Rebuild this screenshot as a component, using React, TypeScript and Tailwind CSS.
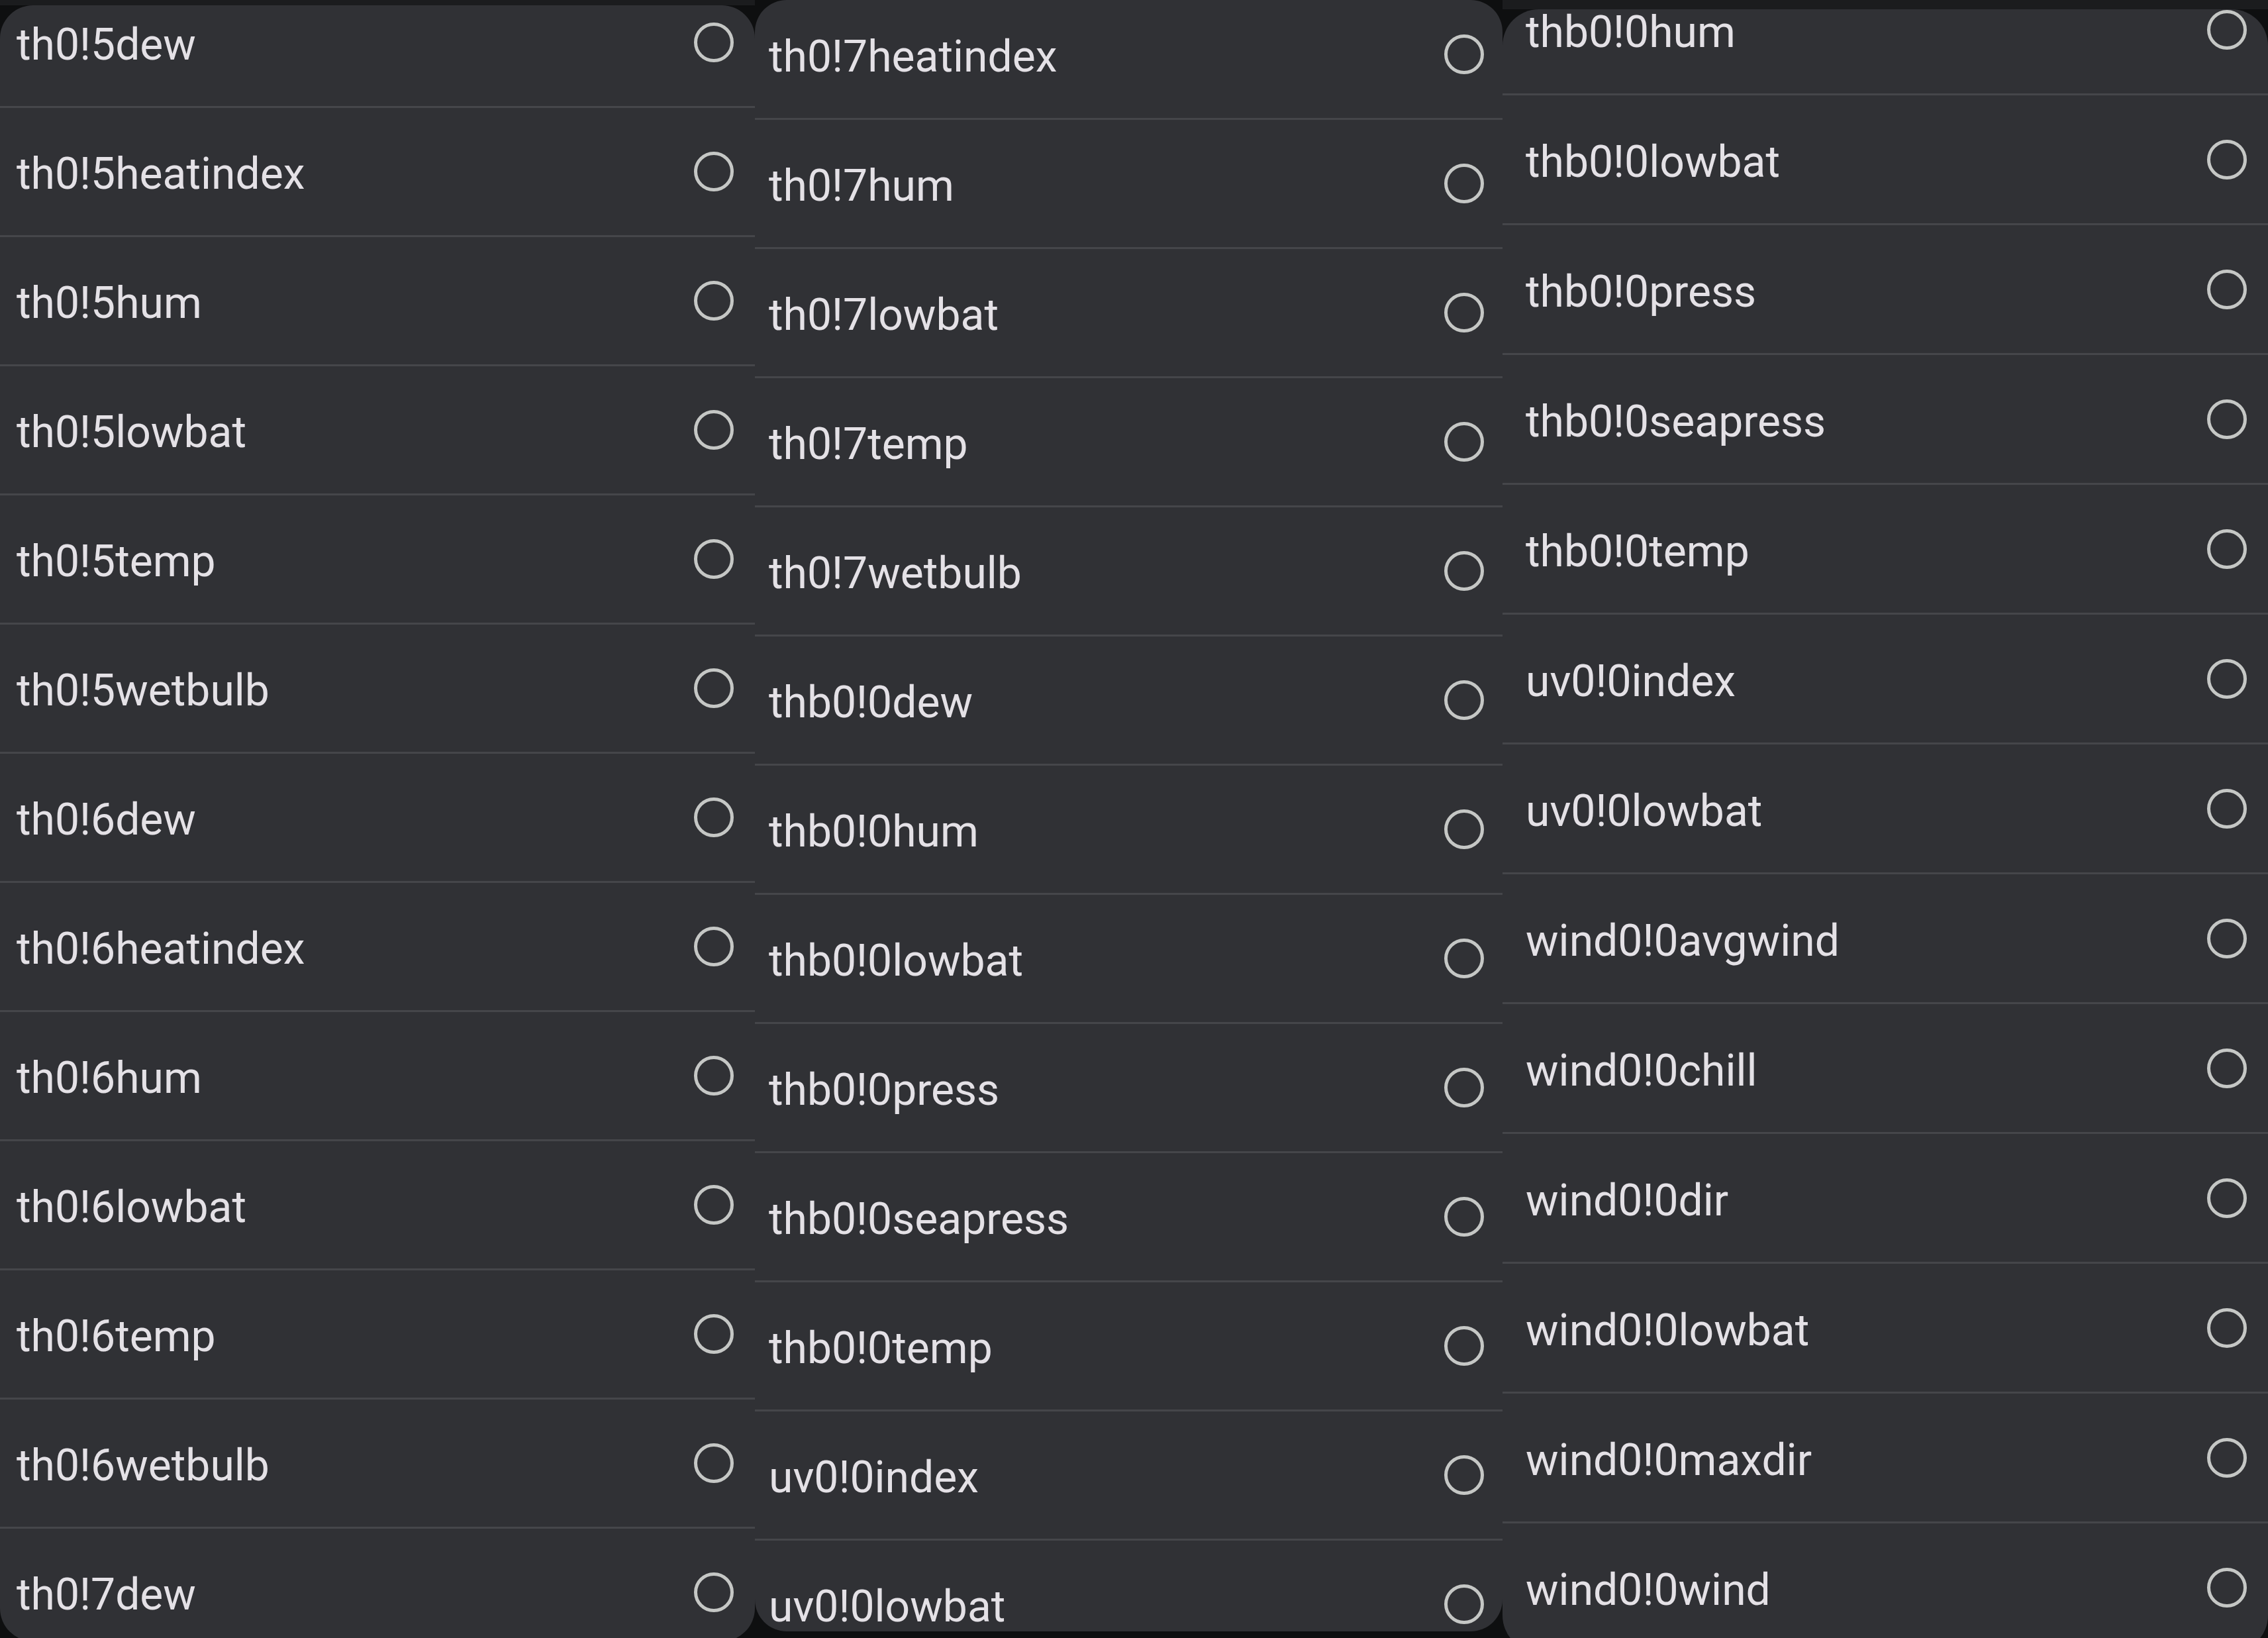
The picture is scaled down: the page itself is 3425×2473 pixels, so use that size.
import React from "react";

type PanelProps = {
  items: string[];
  widthClass: string;
  stripClass: string;
  panelClass: string;
  listClass: string;
  rowClass: string;
  padLeftClass: string;
  padRightClass: string;
};

function Radio() {
  return (
    <div className="w-[60px] h-[60px] rounded-full border-[5px] border-[#c5c7c5] shrink-0" />
  );
}

function Panel({ items, widthClass, stripClass, panelClass, listClass, rowClass, padLeftClass, padRightClass }: PanelProps) {
  return (
    <div className={`${widthClass} shrink-0 flex flex-col bg-[#0e0f10]`}>
      <div className={`${stripClass} bg-[#1b1c1e] shrink-0`} />
      <div className={`${panelClass} bg-[#303135] overflow-hidden shrink-0`}>
        <div className={`${listClass} flex flex-col`}>
          {items.map((it) => (
            <div
              key={it}
              className={`${rowClass} ${padLeftClass} ${padRightClass} shrink-0 flex items-center justify-between border-b-[3px] border-[#45464a]`}
            >
              <span className="text-[66px] leading-none text-[#e4e1e6] font-['Roboto','Noto_Sans',sans-serif] pt-[8px]">
                {it}
              </span>
              <Radio />
            </div>
          ))}
        </div>
      </div>
    </div>
  );
}

export default function App() {
  const p1 = [
    "th0!5dew",
    "th0!5heatindex",
    "th0!5hum",
    "th0!5lowbat",
    "th0!5temp",
    "th0!5wetbulb",
    "th0!6dew",
    "th0!6heatindex",
    "th0!6hum",
    "th0!6lowbat",
    "th0!6temp",
    "th0!6wetbulb",
    "th0!7dew",
  ];
  const p2 = [
    "th0!7heatindex",
    "th0!7hum",
    "th0!7lowbat",
    "th0!7temp",
    "th0!7wetbulb",
    "thb0!0dew",
    "thb0!0hum",
    "thb0!0lowbat",
    "thb0!0press",
    "thb0!0seapress",
    "thb0!0temp",
    "uv0!0index",
    "uv0!0lowbat",
  ];
  const p3 = [
    "thb0!0hum",
    "thb0!0lowbat",
    "thb0!0press",
    "thb0!0seapress",
    "thb0!0temp",
    "uv0!0index",
    "uv0!0lowbat",
    "wind0!0avgwind",
    "wind0!0chill",
    "wind0!0dir",
    "wind0!0lowbat",
    "wind0!0maxdir",
    "wind0!0wind",
  ];
  return (
    <div className="w-[3425px] h-[2473px] overflow-hidden flex bg-[#0e0f10] font-['Roboto',sans-serif]">
      <Panel
        items={p1}
        widthClass="w-[1140px]"
        stripClass="h-[8px]"
        panelClass="h-[2470px] rounded-[50px]"
        listClass="mt-[-40px]"
        rowClass="h-[195px]"
        padLeftClass="pl-[25px]"
        padRightClass="pr-[32px]"
      />
      <Panel
        items={p2}
        widthClass="w-[1129px]"
        stripClass="h-0"
        panelClass="h-[2463px] rounded-[48px]"
        listClass="mt-[-14px]"
        rowClass="h-[195px]"
        padLeftClass="pl-[21px]"
        padRightClass="pr-[28px]"
      />
      <Panel
        items={p3}
        widthClass="w-[1156px]"
        stripClass="h-[14px]"
        panelClass="h-[2480px] rounded-[55px]"
        listClass="mt-[-66px]"
        rowClass="h-[196px]"
        padLeftClass="pl-[35px]"
        padRightClass="pr-[32px]"
      />
    </div>
  );
}
